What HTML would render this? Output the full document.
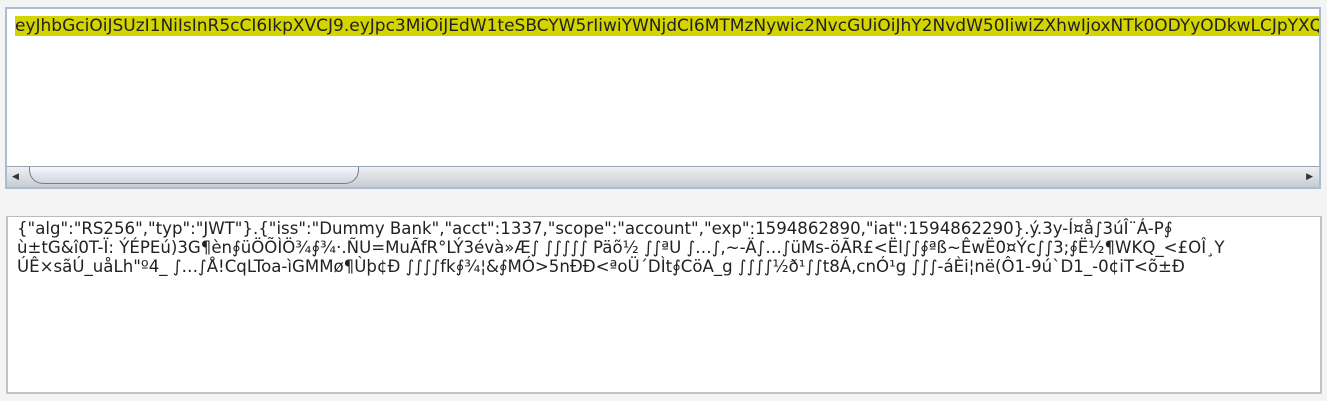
<!DOCTYPE html>
<html><head><meta charset="utf-8"><style>
body{margin:0;width:1327px;height:401px;background:#f4f4f4;font-family:"DejaVu Sans",sans-serif;color:#222;overflow:hidden;position:relative}
#top{position:absolute;left:5px;top:7px;width:1312px;height:178px;border:2px solid #a9bcd4;background:#fff;overflow:hidden}
#top .t{position:absolute;left:8px;top:7px;white-space:nowrap;background:#d4d400;line-height:20px;font-size:17px;padding-right:4px}
#sb{position:absolute;left:0;bottom:0;width:1312px;height:20px;background:linear-gradient(#eef0f3,#c8ccd2);border-top:1px solid #9aa4b0}
#thumb{position:absolute;left:22px;top:0;width:328px;height:16px;border:1px solid #6f7f95;border-top:none;border-radius:0 0 14px 14px;background:linear-gradient(#f6f8fb,#cfd6df)}
.ar{position:absolute;top:5px;font-size:9px;color:#333}
#bot{position:absolute;left:6px;top:216px;width:1312px;height:175px;border:2px solid #c0c3c8;border-top:1px solid #b8bcc2;background:#fff}
#bot .t{position:absolute;left:9px;top:2px;white-space:pre;line-height:19px;font-size:16.6px}
</style></head><body>
<div id="top"><div class="t">eyJhbGciOiJSUzI1NiIsInR5cCI6IkpXVCJ9.eyJpc3MiOiJEdW1teSBCYW5rIiwiYWNjdCI6MTMzNywic2NvcGUiOiJhY2NvdW50IiwiZXhwIjoxNTk0ODYyODkwLCJpYXQiOjE1OTQ4NjIyOTB9</div>
<div id="sb"><span class="ar" style="left:5px">◀</span><div id="thumb"></div><span class="ar" style="right:6px">▶</span></div></div>
<div id="bot"><div class="t">{"alg":"RS256","typ":"JWT"}.{"iss":"Dummy Bank","acct":1337,"scope":"account","exp":1594862890,"iat":1594862290}.ý.3y-Í¤å∫3úÎ¨Á-P∮
ù±tG&amp;î0T-Ï: ÝÉPEú)3G¶èn∮üÖÕÌÖ¾∮¾·.ÑU=MuÃfR°LÝ3évà»Æ∫ ∫∫∫∫∫ Päõ½ ∫∫ªU ∫…∫,~-Ä∫…∫üMs-öÃR£&lt;Ël∫∫∮ªß~ÊwË0¤Ýc∫∫3;∮Ë½¶WKQ_&lt;£OÎ¸Y
ÚÊ×sãÚ_uåLh"º4_ ∫…∫Å!CqLToa-ìGMMø¶Ùþ¢Ð ∫∫∫∫fk∮¾¦&amp;∮MÓ&gt;5nÐÐ&lt;ªoÜ´DÌt∮CöA_g ∫∫∫∫½ð¹∫∫t8Á,cnÓ¹g ∫∫∫-áÈi¦në(Ô1-9ú`D1_-0¢iT&lt;õ±Ð</div></div>
</body></html>
